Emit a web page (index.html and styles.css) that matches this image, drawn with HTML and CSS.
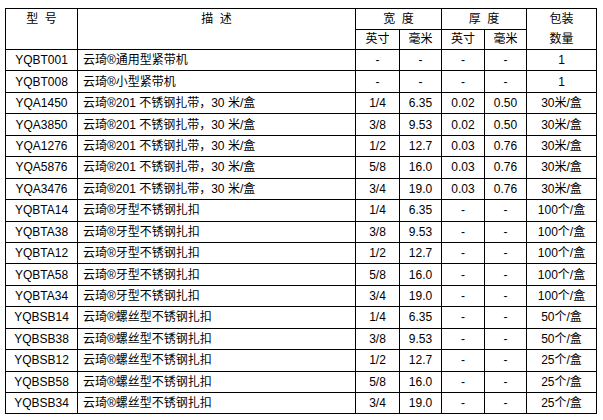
FILE: index.html
```html
<!DOCTYPE html>
<html>
<head>
<meta charset="utf-8">
<link rel="stylesheet" href="styles.css">
</head>
<body>
<table class="spec">
  <colgroup>
    <col class="c-model"><col class="c-desc"><col class="c-w1"><col class="c-w2"><col class="c-t1"><col class="c-t2"><col class="c-pack">
  </colgroup>
  <tr class="h1">
    <th rowspan="2" class="top spaced">型 号</th>
    <th rowspan="2" class="top spaced">描 述</th>
    <th colspan="2" class="spaced">宽 度</th>
    <th colspan="2" class="spaced">厚 度</th>
    <th rowspan="2" class="top">包装<br>数量</th>
  </tr>
  <tr class="h2">
    <th>英寸</th><th>毫米</th><th>英寸</th><th>毫米</th>
  </tr>
  <tr><td>YQBT001</td><td class="desc">云琦®通用型紧带机</td><td>-</td><td>-</td><td>-</td><td>-</td><td>1</td></tr>
  <tr><td>YQBT008</td><td class="desc">云琦®小型紧带机</td><td>-</td><td>-</td><td>-</td><td>-</td><td>1</td></tr>
  <tr><td>YQA1450</td><td class="desc">云琦®201 不锈钢扎带，30 米/盒</td><td>1/4</td><td>6.35</td><td>0.02</td><td>0.50</td><td>30米/盒</td></tr>
  <tr><td>YQA3850</td><td class="desc">云琦®201 不锈钢扎带，30 米/盒</td><td>3/8</td><td>9.53</td><td>0.02</td><td>0.50</td><td>30米/盒</td></tr>
  <tr><td>YQA1276</td><td class="desc">云琦®201 不锈钢扎带，30 米/盒</td><td>1/2</td><td>12.7</td><td>0.03</td><td>0.76</td><td>30米/盒</td></tr>
  <tr><td>YQA5876</td><td class="desc">云琦®201 不锈钢扎带，30 米/盒</td><td>5/8</td><td>16.0</td><td>0.03</td><td>0.76</td><td>30米/盒</td></tr>
  <tr><td>YQA3476</td><td class="desc">云琦®201 不锈钢扎带，30 米/盒</td><td>3/4</td><td>19.0</td><td>0.03</td><td>0.76</td><td>30米/盒</td></tr>
  <tr><td>YQBTA14</td><td class="desc">云琦®牙型不锈钢扎扣</td><td>1/4</td><td>6.35</td><td>-</td><td>-</td><td>100个/盒</td></tr>
  <tr><td>YQBTA38</td><td class="desc">云琦®牙型不锈钢扎扣</td><td>3/8</td><td>9.53</td><td>-</td><td>-</td><td>100个/盒</td></tr>
  <tr><td>YQBTA12</td><td class="desc">云琦®牙型不锈钢扎扣</td><td>1/2</td><td>12.7</td><td>-</td><td>-</td><td>100个/盒</td></tr>
  <tr><td>YQBTA58</td><td class="desc">云琦®牙型不锈钢扎扣</td><td>5/8</td><td>16.0</td><td>-</td><td>-</td><td>100个/盒</td></tr>
  <tr><td>YQBTA34</td><td class="desc">云琦®牙型不锈钢扎扣</td><td>3/4</td><td>19.0</td><td>-</td><td>-</td><td>100个/盒</td></tr>
  <tr><td>YQBSB14</td><td class="desc">云琦®螺丝型不锈钢扎扣</td><td>1/4</td><td>6.35</td><td>-</td><td>-</td><td>50个/盒</td></tr>
  <tr><td>YQBSB38</td><td class="desc">云琦®螺丝型不锈钢扎扣</td><td>3/8</td><td>9.53</td><td>-</td><td>-</td><td>50个/盒</td></tr>
  <tr><td>YQBSB12</td><td class="desc">云琦®螺丝型不锈钢扎扣</td><td>1/2</td><td>12.7</td><td>-</td><td>-</td><td>25个/盒</td></tr>
  <tr><td>YQBSB58</td><td class="desc">云琦®螺丝型不锈钢扎扣</td><td>5/8</td><td>16.0</td><td>-</td><td>-</td><td>25个/盒</td></tr>
  <tr><td>YQBSB34</td><td class="desc">云琦®螺丝型不锈钢扎扣</td><td>3/4</td><td>19.0</td><td>-</td><td>-</td><td>25个/盒</td></tr>
</table>
</body>
</html>
```
FILE: styles.css
```css
html, body {
  background: #ffffff;
}
body {
  margin: 8px 0 0 5px;
  font-family: "Liberation Sans", Arial, "Noto Sans CJK SC", sans-serif;
  font-size: 12px;
  color: #000000;
}
.spec {
  border-collapse: collapse;
  table-layout: fixed;
  width: 591px;
}
.c-model { width: 72px; }
.c-desc { width: 278px; }
.c-w1 { width: 44px; }
.c-w2 { width: 42px; }
.c-t1 { width: 43px; }
.c-t2 { width: 42px; }
.c-pack { width: 70px; }
.spec th, .spec td {
  border: 1px solid #000000;
  padding: 0;
  text-align: center;
  font-weight: normal;
  line-height: 14px;
  white-space: nowrap;
}
.spec tr.h1 th, .spec tr.h2 th {
  height: 19px;
}
.spec th.top {
  vertical-align: top;
  line-height: 20px;
}
.spec th.spaced {
  word-spacing: 3px;
}
.spec td {
  height: 20.45px;
}
.spec td.desc {
  text-align: left;
  padding-left: 5px;
}
```
